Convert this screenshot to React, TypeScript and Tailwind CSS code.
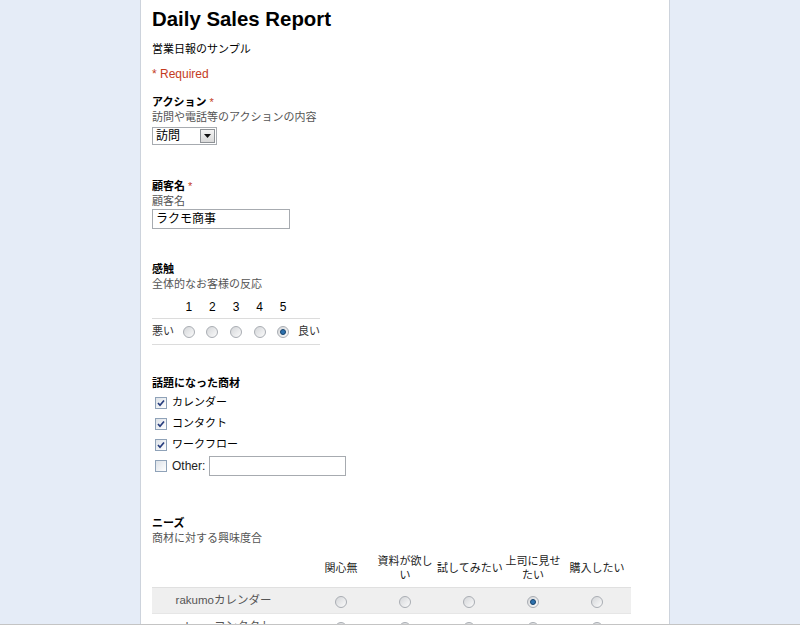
import { ReactNode } from 'react'

const FONT = 'font-["Liberation_Sans","Noto_Sans_CJK_JP",sans-serif]'

function Radio({ checked = false }: { checked?: boolean }) {
    return (
        <span className="flex h-[12px] w-[12px] items-center justify-center rounded-full border border-[#a9adb3] bg-linear-to-br from-[#d4d6d9] to-[#fbfbfb]">
            {checked && <span className="h-[6px] w-[6px] rounded-full border border-[#17426b] bg-[#2e73b0]" />}
        </span>
    )
}

function Checkbox({ checked = false }: { checked?: boolean }) {
    return (
        <span className="flex h-[12px] w-[12px] items-center justify-center border border-[#8fa2b8] bg-linear-to-br from-[#dde2e8] to-white">
            {checked && (
                <svg width="8" height="8" viewBox="0 0 8 8">
                    <polyline points="1,4 3,6.2 7,1.5" fill="none" stroke="#263c7d" strokeWidth="1.7" />
                </svg>
            )}
        </span>
    )
}

function Label({ children, required = false }: { children: ReactNode; required?: boolean }) {
    return (
        <div className="text-[11px] font-bold leading-[15px] text-black">
            {children}
            {required && <span className="font-normal text-[#c43b1d]"> *</span>}
        </div>
    )
}

function Help({ children }: { children: ReactNode }) {
    return <div className="text-[11px] leading-[15px] text-[#555]">{children}</div>
}

const products = ['カレンダー', 'コンタクト', 'ワークフロー']
const needs: ReactNode[] = [
    '関心無',
    <>資料が欲し<br />い</>,
    '試してみたい',
    <>上司に見せ<br />たい</>,
    '購入したい',
]
const gridRows = [
    { name: 'rakumoカレンダー', value: 3 },
    { name: 'rakumoコンタクト', value: -1 },
]

export default function App() {
    return (
        <div className={`${FONT} flex h-[627px] flex-col overflow-hidden bg-[#e5ecf7]`}>
            <div className="flex min-h-0 flex-1">
                <div className="ml-[140px] w-[530px] border-x border-[#cdd3dc] bg-white pl-[11px] pt-[7px]">
                    <h1 className="text-[20.4px] font-bold leading-[24px] text-black">Daily Sales Report</h1>
                    <div className="mt-[10px] text-[11px] leading-[16px] text-black">営業日報のサンプル</div>
                    <div className="mt-[9px] text-[12px] leading-[16px] text-[#c43b1d]">* Required</div>

                    {/* action */}
                    <div className="mt-[13px]">
                        <Label required>アクション</Label>
                        <Help>訪問や電話等のアクションの内容</Help>
                        <div className="mt-[2px] flex h-[18px] w-[65px] items-center justify-between border border-[#a7abb0] pl-[3px] pr-[1px]">
                            <span className="text-[12px] leading-none text-black">訪問</span>
                            <span className="flex h-[14px] w-[15px] items-center justify-center border border-[#8e9296] bg-linear-to-b from-[#f4f4f4] to-[#d9d9d9]">
                                <svg width="7" height="4" viewBox="0 0 7 4">
                                    <polygon points="0,0 7,0 3.5,4" fill="#111" />
                                </svg>
                            </span>
                        </div>
                    </div>

                    {/* customer */}
                    <div className="mt-[34px]">
                        <Label required>顧客名</Label>
                        <Help>顧客名</Help>
                        <div className="flex h-[20px] w-[138px] items-center border border-[#a7abb0] px-[3px] text-[12px] text-black">
                            ラクモ商事
                        </div>
                    </div>

                    {/* impression scale */}
                    <div className="mt-[33px]">
                        <Label>感触</Label>
                        <Help>全体的なお客様の反応</Help>
                        <div className="w-[168px]">
                            <div className="mt-[7px] mb-[3px] flex h-[16px] text-[12px] leading-[16px] text-black">
                                <span className="w-[25px]" />
                                {[1, 2, 3, 4, 5].map(n => (
                                    <span key={n} className="w-[23.6px] text-center">{n}</span>
                                ))}
                            </div>
                            <div className="flex h-[27px] items-center border-y border-[#dcdcdc] text-[11px] text-[#333]">
                                <span className="w-[25px]">悪い</span>
                                {[1, 2, 3, 4, 5].map(n => (
                                    <span key={n} className="flex w-[23.6px] justify-center">
                                        <Radio checked={n === 5} />
                                    </span>
                                ))}
                                <span className="pl-[3px]">良い</span>
                            </div>
                        </div>
                    </div>

                    {/* products */}
                    <div className="mt-[31px]">
                        <Label>話題になった商材</Label>
                        <div className="mt-[1px]">
                            {products.map(p => (
                                <div key={p} className="flex h-[21px] items-center gap-[5px] pl-[3px] text-[11px] text-black">
                                    <Checkbox checked />
                                    <span>{p}</span>
                                </div>
                            ))}
                            <div className="flex h-[21px] items-center pl-[3px] text-[12px] text-[#222]">
                                <Checkbox />
                                <span className="ml-[5px]">Other:</span>
                                <span className="ml-[4px] h-[20px] w-[137px] border border-[#a7abb0]" />
                            </div>
                        </div>
                    </div>

                    {/* needs grid */}
                    <div className="mt-[40px]">
                        <Label>ニーズ</Label>
                        <Help>商材に対する興味度合</Help>
                        <div className="mt-[7px] w-[479px]">
                            <div className="flex h-[30px] items-center text-[11px] leading-[14px] text-[#222]">
                                <span className="w-[157px]" />
                                {needs.map((n, i) => (
                                    <span key={i} className="w-[64px] whitespace-nowrap text-center">{n}</span>
                                ))}
                            </div>
                            <div className="mt-[4px]">
                                {gridRows.map((r, ri) => (
                                    <div
                                        key={r.name}
                                        className={`flex h-[26px] items-center border-t ${ri % 2 === 0 ? 'border-[#e0e0e0] bg-[#efefef]' : 'border-[#e6e6e6] bg-white'}`}
                                    >
                                        <span className="w-[157px] pr-[14px] text-center text-[11.5px] text-[#555]">{r.name}</span>
                                        {needs.map((_, i) => (
                                            <span key={i} className="flex w-[64px] justify-center pt-[3px]">
                                                <Radio checked={i === r.value} />
                                            </span>
                                        ))}
                                    </div>
                                ))}
                            </div>
                        </div>
                    </div>
                </div>
            </div>
            <div className="h-[3px] border-t border-[#c4c4c4] bg-white" />
        </div>
    )
}
